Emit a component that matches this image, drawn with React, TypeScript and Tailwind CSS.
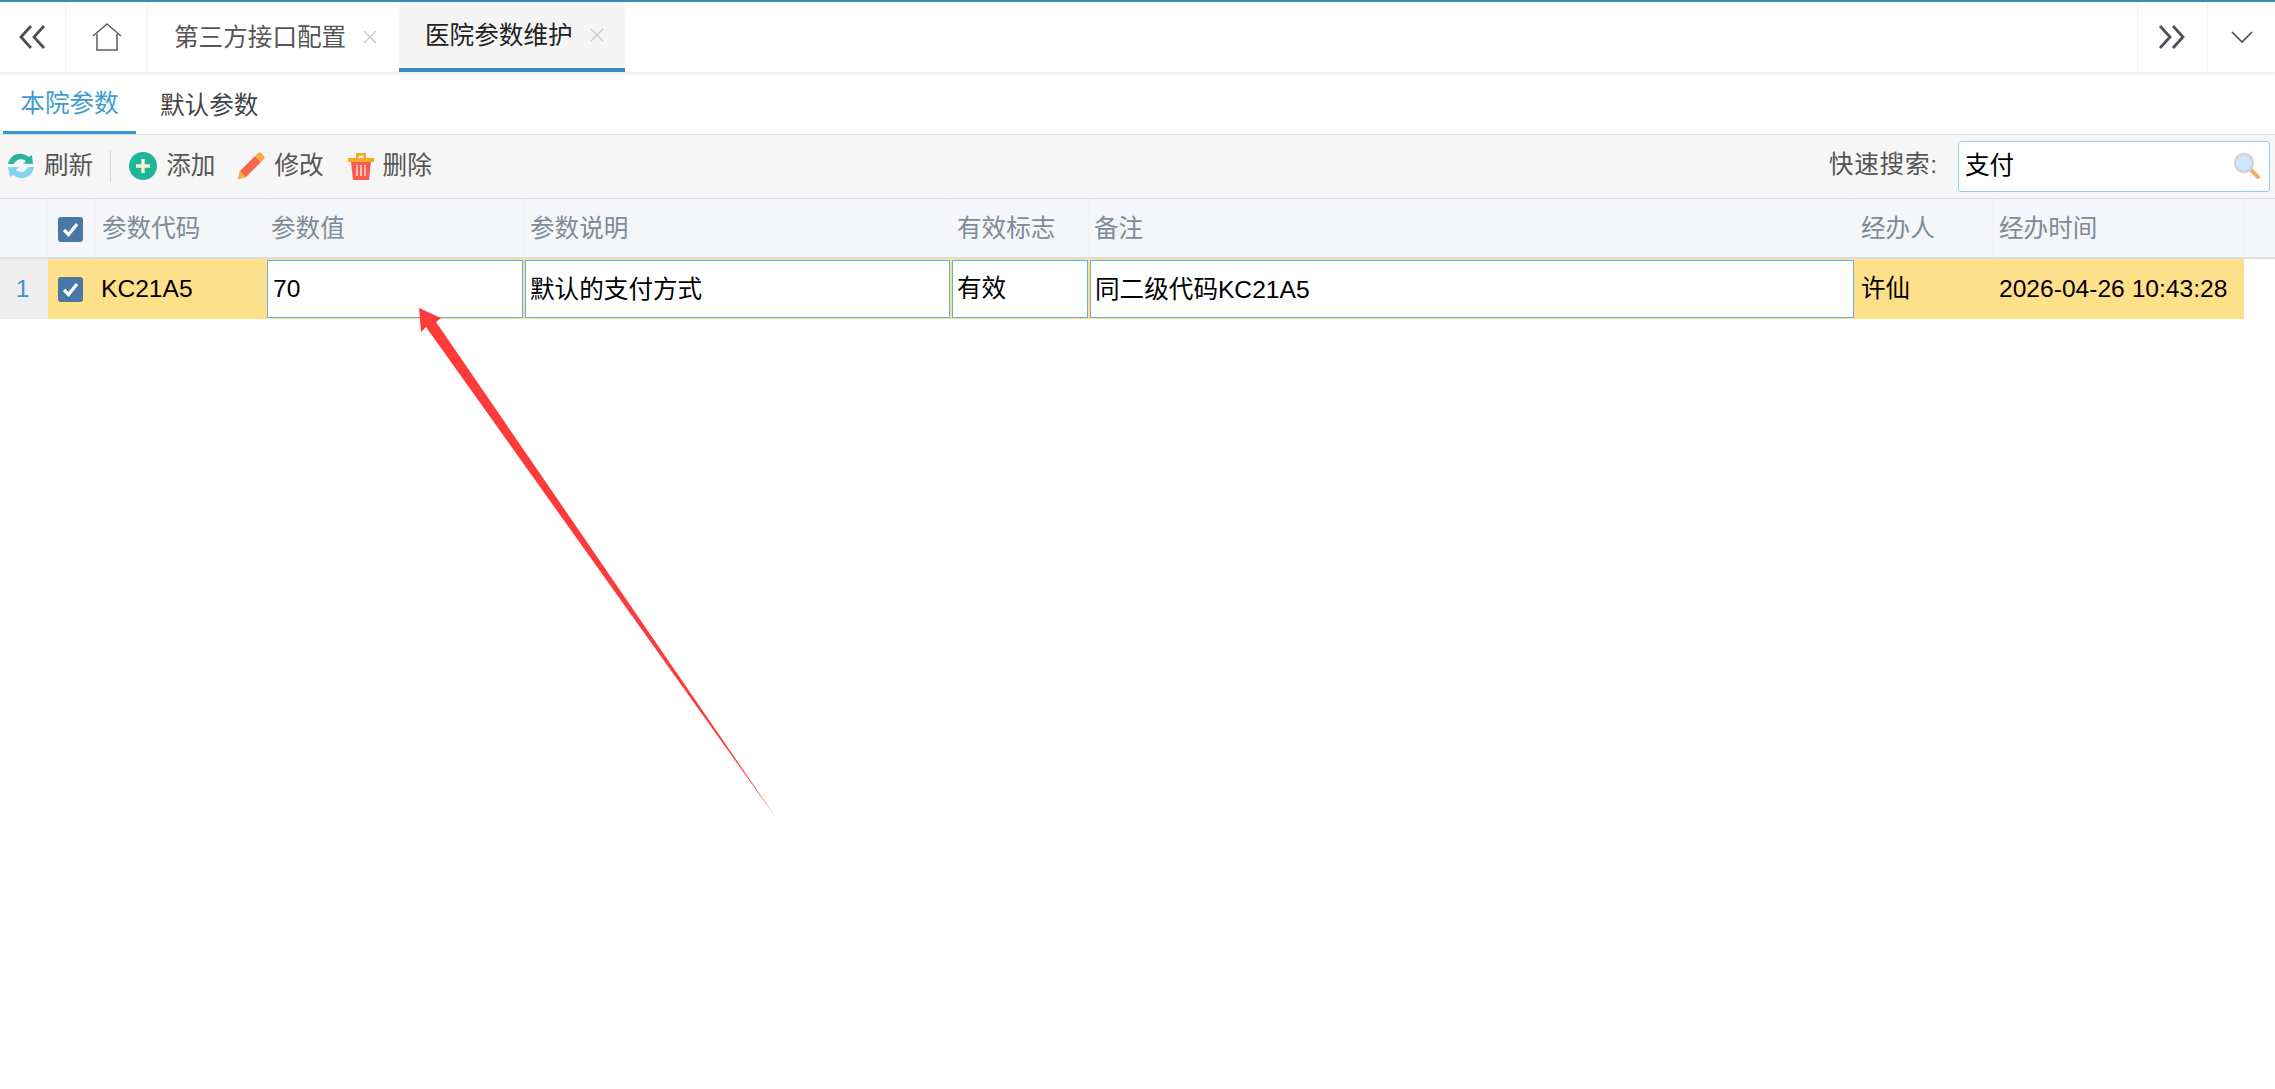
const font = "font-['Liberation_Sans','Noto_Sans_CJK_SC',sans-serif]";

function Tab({ label, active, w }: { label: string; active?: boolean; w: string }) {
  return (
    <div className={`flex h-full items-center pl-[26px] text-[24.6px] ${w} ${active ? "border-b-4 border-[#3a8cbc] bg-[#f5f5f5] text-[#222]" : "border-l border-[#eeeeee] text-[#555]"}`}>
      <span className="pt-[2px]">{label}</span>
      <svg width="16" height="16" viewBox="0 0 16 16" className="ml-[16px]">
        <path d="M2 2L14 14M14 2L2 14" stroke="#c4c8cc" strokeWidth="1.4" />
      </svg>
    </div>
  );
}

function Refresh() {
  return (
    <svg width="28" height="28" viewBox="0 0 28 28">
      <path d="M1 12C3 4 9 1 15 2c3 .5 5 2 7 3l3-2 1 9-10-.5 3-2.500C15 6 9 7 7 12Z" fill="#2cb59b" />
      <path d="M27 15c-1 8-8 12-14 11-3-.5-5-2-7-3l-3 2-2-10h11l-3 3c4 3 10 2 12-3Z" fill="#86d4f4" />
    </svg>
  );
}

function Plus() {
  return (
    <svg width="28" height="28" viewBox="0 0 28 28">
      <circle cx="14" cy="14" r="14" fill="#1eb59a" />
      <path d="M14 7v14M7 14h14" stroke="#fbf3d0" strokeWidth="3.4" />
    </svg>
  );
}

function Pen() {
  return (
    <svg width="28" height="28" viewBox="0 0 28 28">
      <path d="M1 27l2-8L18 4l6 6L9 25Z" fill="#f8654a" />
      <path d="M1 27l2-8 6 6Z" fill="#fcae4a" />
      <path d="M18 4l3-3c1-.6 2-.6 3 0l3 3c.6 1 .6 2 0 3l-3 3Z" fill="#f9a843" />
    </svg>
  );
}

function Trash() {
  return (
    <svg width="26" height="28" viewBox="0 0 26 28">
      <path d="M8 6V1h10v5h-2.500V3.500h-5V6Z" fill="#f5a623" />
      <rect x="0" y="6" width="26" height="4" fill="#f9ab1e" />
      <path d="M3 10h20l-2 18H5Z" fill="#fb5b4e" />
      <path d="M9 13v11M13 13v11M17 13v11" stroke="#ffd9d0" strokeWidth="1.6" />
    </svg>
  );
}

function Check() {
  return (
    <div className="flex h-[25px] w-[25px] items-center justify-center rounded-[3px] bg-[#4a78a6]">
      <svg width="19" height="17" viewBox="0 0 19 17">
        <path d="M3 9l4.500 4.500L16 3" fill="none" stroke="#fff" strokeWidth="3.200" />
      </svg>
    </div>
  );
}

function ToolButton({ icon, label, ml }: { icon: React.ReactNode; label: string; ml: string }) {
  return (
    <div className={`flex items-center ${ml}`}>
      {icon}
      <span className="ml-[9px]">{label}</span>
    </div>
  );
}

function Cell({ children, cjk }: { children?: React.ReactNode; cjk?: boolean }) {
  return (
    <div className={`mb-px ml-px mr-px mt-px flex min-w-0 items-center border-[1.5px] border-[#62aee8] bg-white pl-[4px] text-[24.6px] leading-none text-black ${cjk ? "pt-[2px]" : ""}`}>
      {children}
    </div>
  );
}

function Head({ children, pl = "pl-[6px]" }: { children?: React.ReactNode; pl?: string }) {
  return <div className={`flex items-center border-r border-[#f0f2f6] pt-[2px] ${pl}`}>{children}</div>;
}

const gridCols = "grid-cols-[48px_48px_170px_258px_427px_138px_766px_138px_251px]";

export default function App() {
  return (
    <div className={`relative h-[1089px] w-[2275px] overflow-hidden bg-white ${font}`}>
      <div className="flex h-[72px] items-center border-t-2 border-[#3a8cbc] shadow-[0_2px_3px_rgba(0,0,0,0.08)]">
        <div className="flex h-full w-[65px] items-center justify-center pr-[2px]">
          <svg width="28" height="26" viewBox="0 0 28 26">
            <path d="M13 2L3 13l10 11M26 2L16 13l10 11" fill="none" stroke="#4d5157" strokeWidth="2.800" />
          </svg>
        </div>
        <div className="flex h-full w-[82px] items-center justify-center border-l border-[#eeeeee]">
          <svg width="30" height="28" viewBox="0 0 30 28">
            <path d="M1 13L15 1l14 12M5 11v16h20V11" fill="none" stroke="#5a5e63" strokeWidth="1.500" />
          </svg>
        </div>
        <Tab label="第三方接口配置" w="w-[252px]" />
        <Tab label="医院参数维护" w="w-[226px]" active />
        <div className="flex-1" />
        <div className="flex h-full w-[70px] items-center justify-center border-l border-[#eeeeee] pr-[2px]">
          <svg width="28" height="26" viewBox="0 0 28 26">
            <path d="M2 2l10 11L2 24M15 2l10 11-10 11" fill="none" stroke="#4d5157" strokeWidth="2.800" />
          </svg>
        </div>
        <div className="flex h-full w-[68px] items-center justify-center border-l border-[#eeeeee]">
          <svg width="24" height="14" viewBox="0 0 24 14">
            <path d="M2 2l10 10L22 2" fill="none" stroke="#4d5157" strokeWidth="1.700" />
          </svg>
        </div>
      </div>

      <div className="flex h-[63px] items-end border-b border-[#dddddd] pl-[3px] text-[24.6px]">
        <div className="flex h-[60px] w-[133px] items-center justify-center border-b-[3px] border-[#3498cf] pt-[4px] text-[#3f9bd0]">本院参数</div>
        <div className="flex h-[60px] items-center pl-[24px] pt-[4px] text-[#444]">默认参数</div>
      </div>

      <div className="flex h-[64px] items-center justify-between border-b border-[#dddddd] bg-[#f6f6f6] text-[24.6px] text-[#555]">
        <div className="flex items-center pl-[7px]">
          <ToolButton icon={<Refresh />} label="刷新" ml="" />
          <div className="ml-[17px] h-[32px] w-px bg-[#d8d8d8]" />
          <ToolButton icon={<Plus />} label="添加" ml="ml-[18px]" />
          <ToolButton icon={<Pen />} label="修改" ml="ml-[22px]" />
          <ToolButton icon={<Trash />} label="删除" ml="ml-[24px]" />
        </div>
        <div className="flex items-center pr-[5px]">
          <span className="pb-[2px] tracking-[0.8px]">快速搜索:</span>
          <div className="mb-[1px] ml-[20px] flex h-[51px] w-[312px] items-center justify-between rounded-[3px] border border-[#90cdf4] bg-white pl-[6px] pr-[8px] text-black">
            <span>支付</span>
            <svg width="28" height="28" viewBox="0 0 28 28">
              <path d="M17 17l8 8" stroke="#f0b070" strokeWidth="4" strokeLinecap="round" />
              <circle cx="11" cy="11" r="9" fill="#cfe6fa" stroke="#cfd6da" strokeWidth="2.500" />
            </svg>
          </div>
        </div>
      </div>

      <div className={`grid h-[60px] ${gridCols} border-b-2 border-[#dddddd] bg-[#f4f6fa] text-[24.6px] text-[#7f8b98]`}>
        <Head />
        <Head pl="pl-[10px]"><Check /></Head>
        <Head>参数代码</Head>
        <Head pl="pl-[5px]">参数值</Head>
        <Head pl="pl-[6px]">参数说明</Head>
        <Head pl="pl-[6px]">有效标志</Head>
        <Head pl="pl-[5px]">备注</Head>
        <Head pl="pl-[6px]">经办人</Head>
        <Head pl="pl-[6px]">经办时间</Head>
      </div>

      <div className={`grid h-[60px] ${gridCols} text-[24.6px] text-black`}>
        <div className="flex items-center justify-center bg-[#eeeeee] pr-[3px] text-[#3a96cc]">1</div>
        <div className="flex items-center bg-[#ffe08a] pl-[10px]"><Check /></div>
        <div className="flex items-center bg-[#ffe08a] pl-[5px]">KC21A5</div>
        <div className="grid bg-[#ffe08a]"><Cell><span className="ml-px">70</span></Cell></div>
        <div className="grid bg-[#ffe08a]"><Cell cjk>默认的支付方式</Cell></div>
        <div className="grid bg-[#ffe08a]"><Cell>有效</Cell></div>
        <div className="grid bg-[#ffe08a]"><Cell cjk>同二级代码KC21A5</Cell></div>
        <div className="flex items-center bg-[#ffe08a] pl-[6px]">许仙</div>
        <div className="flex items-center bg-[#ffe08a] pl-[6px]">2026-04-26 10:43:28</div>
      </div>

      <svg className="pointer-events-none absolute left-0 top-0" width="2275" height="1089" viewBox="0 0 2275 1089">
        <defs>
          <linearGradient id="arrowFade" gradientUnits="userSpaceOnUse" x1="419" y1="308" x2="779" y2="822">
            <stop offset="0.96" stopColor="#fd3b3b" />
            <stop offset="1" stopColor="#fd3b3b" stopOpacity="0.2" />
          </linearGradient>
        </defs>
        <polygon points="419,308 441,318 436,322 779,822 426,327 421,332" fill="url(#arrowFade)" />
      </svg>
    </div>
  );
}
